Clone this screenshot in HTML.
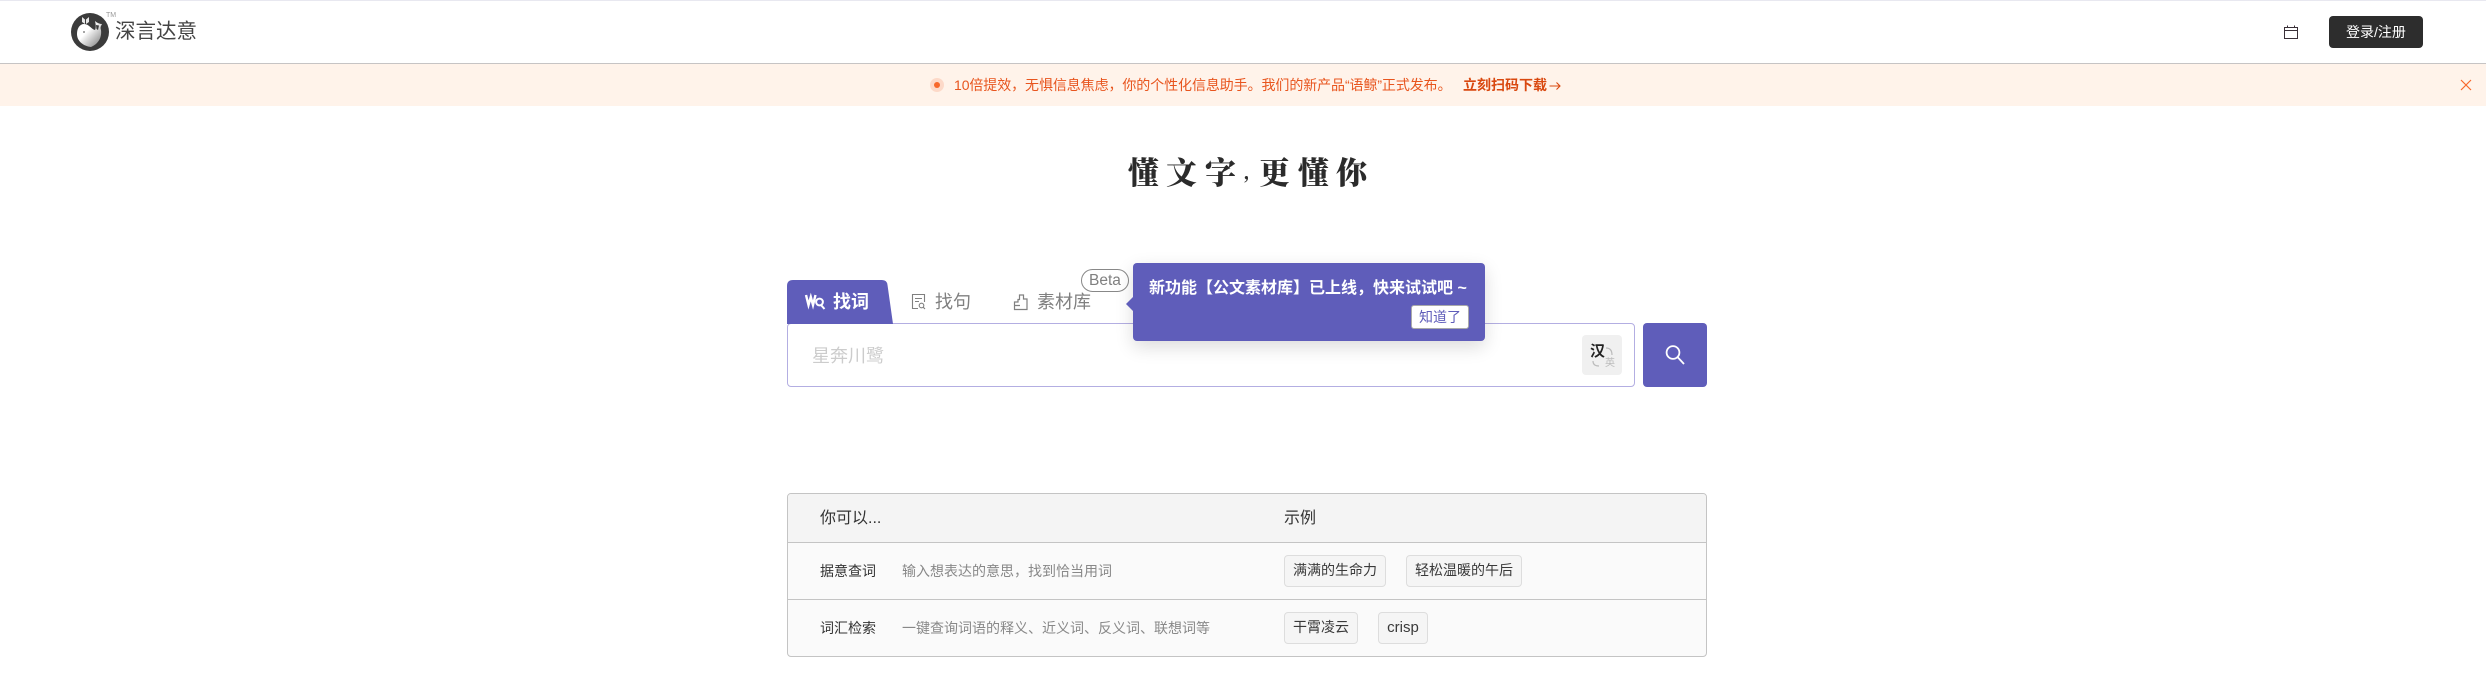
<!DOCTYPE html>
<html lang="zh">
<head>
<meta charset="utf-8">
<title>深言达意</title>
<style>
html,body{margin:0;padding:0;background:#fff;}
body{position:relative;width:2486px;height:696px;overflow:hidden;font-family:"Liberation Sans","Noto Sans CJK SC",sans-serif;color:#333;}
.a{position:absolute;white-space:nowrap;}
svg{position:absolute;overflow:visible;}
.t{line-height:20px;font-size:14px;}
.h{position:absolute;top:149px;font-family:'Noto Serif CJK SC','Liberation Serif',serif;font-weight:900;font-size:31px;line-height:44px;color:#2b2b2b;}
.chip{position:absolute;box-sizing:border-box;height:32px;line-height:29px;background:#f5f5f5;border:1px solid #ddd;border-radius:4px;font-size:14px;color:#3a3a3a;text-align:center;white-space:nowrap;}
</style>
</head>
<body>
<div class="a" style="left:0;top:0;width:2486px;height:1px;background:#e8e8f0"></div>
<div class="a" style="left:0;top:63px;width:2486px;height:1px;background:#c6c4c4"></div>
<div class="a" style="left:0;top:64px;width:2486px;height:42px;background:#fff3ea"></div>

<svg style="left:71px;top:13px" width="38" height="38" viewBox="0 0 38 38">
<defs><linearGradient id="g" x1="0" y1="0" x2="1" y2="1"><stop offset=".4" stop-color="#fff"/><stop offset="1" stop-color="#777"/></linearGradient></defs>
<circle cx="19" cy="19" r="19" fill="#3b3b3b"/>
<path d="M6 21C6 15 9 11 13 11C18 11 20 16 24 17C25 15 25 12 24 8C26 10 29 11 31 11C30 13 29 14 30 17C31 25 27 31 20 34C12 33 6 28 6 21Z" fill="url(#g)"/>
<path d="M25 12L28 12.500L27 17L25.500 16Z" fill="#3b3b3b"/>
<path d="M11 4L14 6.500L14 11L11 9ZM18 4L15 6.500L15 11L18 9Z" fill="#e8e8e8"/>
<circle cx="13" cy="19" r=".9" fill="#666"/>
</svg>
<div class="a" style="left:106px;top:12px;font-size:7px;line-height:7px;color:#999">TM</div>
<div class="a" style="left:115px;top:17px;font-size:20.5px;line-height:30px;color:#444">深言达意</div>

<svg style="left:2284px;top:25px" width="14" height="14" viewBox="0 0 14 14" fill="none" stroke="#3a3038" stroke-width="1">
<rect x=".5" y="2.500" width="13" height="11"/><path d="M.5 5.500H13.500M3.500 .5V3M10.500 .5V3"/>
</svg>
<div class="a" style="left:2329px;top:16px;width:94px;height:32px;background:#2d2d2d;border-radius:4px;color:#fff;font-size:14px;line-height:32px;text-align:center">登录/注册</div>

<div class="a" style="left:930px;top:78px;width:14px;height:14px;border-radius:50%;background:#fdd9c8"></div>
<div class="a" style="left:934px;top:82px;width:6px;height:6px;border-radius:50%;background:#f8672a"></div>
<div class="a t" style="left:954px;top:75px;color:#e8551e;letter-spacing:-.09px">10倍提效，无惧信息焦虑，你的个性化信息助手。我们的新产品“语鲸”正式发布。</div>
<div class="a t" style="left:1463px;top:75px;color:#d9480f;font-weight:bold">立刻扫码下载</div>
<svg style="left:1549px;top:81px" width="12" height="10" viewBox="0 0 12 10" fill="none" stroke="#d9480f" stroke-width="1.100"><path d="M.5 5H11M7.500 1.500L11 5L7.500 8.500"/></svg>
<svg style="left:2461px;top:80px" width="10" height="10" viewBox="0 0 10 10" fill="none" stroke="#f8672a" stroke-width="1.200"><path d="M0 0L10 10M10 0L0 10"/></svg>

<div class="h" style="left:1128px">懂</div>
<div class="h" style="left:1166px">文</div>
<div class="h" style="left:1205px">字</div>
<div class="h" style="left:1243px;font-size:20px;font-weight:700">,</div>
<div class="h" style="left:1259px">更</div>
<div class="h" style="left:1298px">懂</div>
<div class="h" style="left:1336px">你</div>

<!-- search box -->
<div class="a" style="left:787px;top:323px;box-sizing:border-box;width:848px;height:64px;border:1.5px solid #b3aee2;border-radius:4px;background:#fff"></div>
<svg style="left:787px;top:280px" width="107" height="44" viewBox="0 0 107 44"><path d="M0 44V6Q0 0 6 0H95Q100 0 100.500 5L106 44Z" fill="#5f5dba"/></svg>
<svg style="left:805px;top:293px" width="21" height="18" viewBox="0 0 21 18" fill="none" stroke="#fff">
<path d="M1 2L3.500 12L5.800 4L8 12L10.500 2" stroke-width="2.400"/><circle cx="14.500" cy="9" r="3.400" stroke-width="2"/><path d="M16 12L19.500 16" stroke-width="2"/>
</svg>
<div class="a" style="left:833px;top:289px;font-size:18px;font-weight:bold;line-height:26px;color:#fff">找词</div>

<svg style="left:912px;top:294px" width="14" height="16" viewBox="0 0 14 16" fill="none" stroke="#808080" stroke-width="1.100">
<path d="M6 14.500H.5V.5H12.500V8M3 4.500H10M3 7.500H7"/><circle cx="9.500" cy="11.500" r="2.300"/><path d="M11.200 13.200L13 15"/>
</svg>
<div class="a" style="left:935px;top:289px;font-size:18px;line-height:26px;color:#808080">找句</div>

<svg style="left:1014px;top:294px" width="14" height="16" viewBox="0 0 14 16" fill="none" stroke="#808080" stroke-width="1.200">
<path d="M.5 15.500V8H4V5.500H5.500V1H9.500V5H13V15.500ZM.5 11.500H6"/>
</svg>
<div class="a" style="left:1037px;top:289px;font-size:18px;line-height:26px;color:#808080">素材库</div>
<div class="a" style="left:1081px;top:269px;box-sizing:border-box;width:48px;height:23px;border:1px solid #888;border-radius:12px;background:#fff;color:#808080;font-size:15.500px;line-height:21px;text-align:center">Beta</div>

<div class="a" style="left:812px;top:343px;font-size:18px;line-height:26px;color:#ccc">星奔川鹭</div>

<div class="a" style="left:1582px;top:335px;width:40px;height:40px;border-radius:4px;background:#f0f0f0"></div>
<div class="a" style="left:1590px;top:342px;font-size:15px;font-weight:bold;line-height:20px;color:#222">汉</div>
<div class="a" style="left:1605px;top:358px;font-size:10px;line-height:12px;color:#bbb">英</div>
<svg style="left:1590px;top:345px" width="26" height="26" viewBox="0 0 26 26" fill="none" stroke="#bbb" stroke-width="1.200">
<path d="M16 3Q22 3 22 10"/><path d="M3 16Q3 21 9 21"/>
</svg>

<div class="a" style="left:1643px;top:323px;width:64px;height:64px;border-radius:4px;background:#5f5dba"></div>
<svg style="left:1664px;top:344px" width="22" height="22" viewBox="0 0 22 22" fill="none" stroke="#fff" stroke-width="1.800"><circle cx="9" cy="8.500" r="6.400"/><path d="M13.500 13L20 20"/></svg>

<!-- tooltip -->
<div class="a" style="left:1133px;top:263px;width:352px;height:78px;border-radius:4px;background:#5f5dba;box-shadow:0 6px 18px rgba(0,0,0,.14)"></div>
<svg style="left:1126px;top:296px" width="8" height="16" viewBox="0 0 8 16"><path d="M8 0V16L0 8Z" fill="#5f5dba"/></svg>
<div class="a" style="left:1149px;top:277px;font-size:16px;font-weight:bold;line-height:24px;color:#fff">新功能【公文素材库】已上线，快来试试吧 ~</div>
<div class="a" style="left:1411px;top:305px;box-sizing:border-box;width:58px;height:24px;border:1px solid #aaa;border-radius:3px;background:#fff;color:#5f5dba;font-size:14px;line-height:22px;text-align:center">知道了</div>

<!-- table -->
<div class="a" style="left:787px;top:493px;box-sizing:border-box;width:920px;height:164px;border:1px solid #c4c4c4;border-radius:4px;background:#fafafa;overflow:hidden">
<div style="position:absolute;left:0;top:0;width:918px;height:48px;background:#f4f4f4;border-bottom:1px solid #c4c4c4"></div>
<div style="position:absolute;left:0;top:105px;width:918px;height:1px;background:#c4c4c4"></div>
</div>
<div class="a" style="left:820px;top:507px;font-size:16px;line-height:24px;color:#333">你可以...</div>
<div class="a" style="left:1284px;top:507px;font-size:16px;line-height:24px;color:#333">示例</div>
<div class="a t" style="left:820px;top:561px;color:#333">据意查词</div>
<div class="a t" style="left:902px;top:561px;color:#888">输入想表达的意思，找到恰当用词</div>
<div class="a t" style="left:820px;top:618px;color:#333">词汇检索</div>
<div class="a t" style="left:902px;top:618px;color:#888">一键查询词语的释义、近义词、反义词、联想词等</div>
<div class="chip" style="left:1284px;top:555px;width:102px">满满的生命力</div>
<div class="chip" style="left:1406px;top:555px;width:116px">轻松温暖的午后</div>
<div class="chip" style="left:1284px;top:612px;width:74px">干霄凌云</div>
<div class="chip" style="left:1378px;top:612px;width:50px;font-size:15px">crisp</div>
</body>
</html>
